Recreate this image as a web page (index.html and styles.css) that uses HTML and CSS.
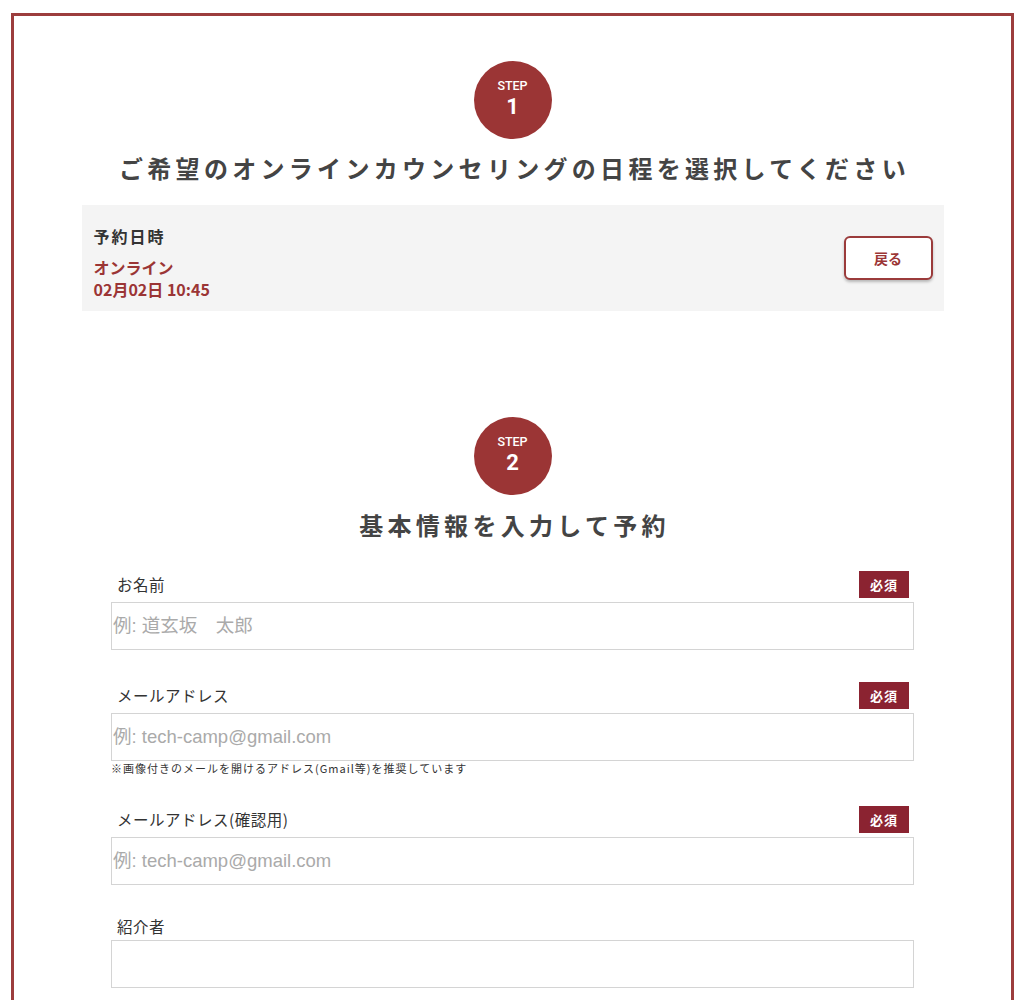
FILE: index.html
```html
<!DOCTYPE html>
<html lang="ja">
<head>
<meta charset="utf-8">
<title>予約</title>
<link rel="stylesheet" href="styles.css">
</head>
<body>
<div class="frame">
  <section class="step">
    <div class="step-badge"><span class="step-label">STEP</span><span class="step-num">1</span></div>
    <h2 class="step-title">ご希望のオンラインカウンセリングの日程を選択してください</h2>
  </section>
  <div class="summary">
    <div class="summary-info">
      <div class="summary-head">予約日時</div>
      <div class="summary-val">オンライン</div>
      <div class="summary-val">02月02日 10:45</div>
    </div>
    <button class="back-btn" type="button">戻る</button>
  </div>

  <section class="step step-two">
    <div class="step-badge"><span class="step-label">STEP</span><span class="step-num">2</span></div>
    <h2 class="step-title">基本情報を入力して予約</h2>
  </section>

  <form class="form">
    <div class="field">
      <div class="field-row"><label class="field-label">お名前</label><span class="req">必須</span></div>
      <input class="field-input" type="text" placeholder="例: 道玄坂　太郎">
    </div>
    <div class="field">
      <div class="field-row"><label class="field-label">メールアドレス</label><span class="req">必須</span></div>
      <input class="field-input" type="text" placeholder="例: tech-camp@gmail.com">
      <p class="field-note">※画像付きのメールを開けるアドレス(Gmail等)を推奨しています</p>
    </div>
    <div class="field">
      <div class="field-row"><label class="field-label">メールアドレス(確認用)</label><span class="req">必須</span></div>
      <input class="field-input" type="text" placeholder="例: tech-camp@gmail.com">
    </div>
    <div class="field">
      <div class="field-row"><label class="field-label">紹介者</label></div>
      <input class="field-input" type="text">
    </div>
  </form>
</div>
</body>
</html>
```
FILE: styles.css
```css
* { box-sizing: border-box; }
html, body { margin: 0; padding: 0; background: #fff; }
body {
  font-family: "Noto Sans CJK JP", "Noto Sans", sans-serif;
  color: #333;
}
.frame {
  margin: 13px 10px 0 11px;
  border: 3px solid #9c3d3d;
  padding: 45px 0 80px;
}
.step {
  display: flex;
  flex-direction: column;
  align-items: center;
}
.step-two { margin-top: 106px; }
.step-badge {
  width: 78px;
  height: 78px;
  border-radius: 50%;
  background: #9b3535;
  color: #fff;
  display: flex;
  flex-direction: column;
  align-items: center;
  justify-content: center;
  padding-bottom: 3px;
  font-family: Roboto, "Noto Sans", sans-serif;
}
.step-label { font-size: 12.5px; line-height: 13px; font-weight: 500; margin-bottom: 4px; }
.step-num { font-size: 22px; line-height: 22px; font-weight: 700; }
.step-title {
  margin: 11px 0 0;
  font-size: 24px;
  line-height: 36px;
  font-weight: 700;
  color: #444;
  letter-spacing: 4.3px;
  padding-left: 4px;
}
.step-two .step-title { margin-top: 12px; }
.summary {
  width: 862px;
  margin: 19px auto 0;
  background: #f4f4f4;
  padding: 20px 11px 11px 12px;
  display: flex;
  align-items: center;
  justify-content: space-between;
}
.summary-head {
  font-size: 16px;
  line-height: 22px;
  font-weight: 700;
  letter-spacing: 2px;
  color: #333;
  margin-bottom: 9px;
}
.summary-val {
  font-size: 16px;
  line-height: 22px;
  font-weight: 700;
  color: #9b3535;
}
.back-btn {
  width: 89px;
  height: 44px;
  margin-top: -9px;
  background: #fff;
  border: 2px solid #9b3b3b;
  border-radius: 6px;
  box-shadow: 0 2px 3px rgba(0,0,0,0.25);
  color: #9b3535;
  font-family: "Noto Sans CJK JP", sans-serif;
  font-size: 14px;
  font-weight: 700;
}
.form {
  width: 803px;
  margin: 28px auto 0;
}
.field { margin-bottom: 32px; }
.field-row {
  display: flex;
  align-items: center;
  justify-content: space-between;
  min-height: 19px;
  margin-bottom: 4px;
  padding: 0 5px 0 6px;
}
.field-label {
  font-size: 15.5px;
  line-height: 19px;
  letter-spacing: 0.5px;
  color: #333;
}
.req {
  width: 50px;
  height: 27px;
  background: #8b2331;
  color: #fff;
  font-size: 13px;
  font-weight: 700;
  display: flex;
  align-items: center;
  justify-content: center;
  letter-spacing: 1px;
}
.field-input {
  display: block;
  width: 100%;
  height: 48px;
  border: 1px solid #d4d4d4;
  padding: 0 1px;
  font-family: "Liberation Sans", "Noto Sans CJK JP", sans-serif;
  font-size: 18.5px;
  color: #333;
  background: #fff;
  outline: none;
}
.field-input::placeholder { color: #aaa; }
.field-note {
  margin: 0 0 -1px;
  font-size: 11px;
  line-height: 14px;
  letter-spacing: 1px;
  color: #333;
}
```
